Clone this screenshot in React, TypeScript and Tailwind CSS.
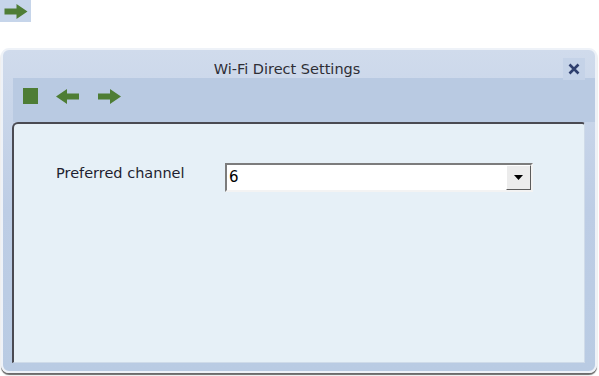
import React from 'react';

const font = { fontFamily: '"DejaVu Sans", Tahoma, sans-serif' };

const ArrowRight: React.FC<{ className?: string }> = ({ className }) => (
  <svg viewBox="0 0 25 17" className={className}>
    <path d="M1 5.5 H13 V1 L24 8.5 L13 16 V11.5 H1 Z" fill="#4e7d35" />
  </svg>
);

const ArrowLeft: React.FC<{ className?: string }> = ({ className }) => (
  <svg viewBox="0 0 25 17" className={className}>
    <path d="M24 5.5 H12 V1 L1 8.5 L12 16 V11.5 H24 Z" fill="#4e7d35" />
  </svg>
);

const App: React.FC = () => {
  return (
    <div className="w-[599px] h-[376px] bg-white overflow-hidden" style={font}>
      <div className="w-[31px] h-[22px] bg-[#c6d5ea] flex items-center justify-center">
        <ArrowRight className="w-[26px] h-[17px]" />
      </div>

      <div className="mt-[26px] ml-[1px] w-[596px] h-[325px] rounded-[8px] border-2 border-[#eef2f8] bg-gradient-to-b from-[#d0dbec] via-[#bdcde5] to-[#b9cbe3] shadow-[0_2px_1px_#6b6b6b] flex flex-col">
        <div className="h-[28px] flex items-end relative">
          <div className="flex-1 text-center text-[14.5px] leading-[18px] text-[#2e2e36] pr-[24px]">Wi-Fi Direct Settings</div>
          <div className="absolute right-[10px] top-[8px] w-[22px] h-[22px] bg-[#c5d3e8] flex items-center justify-center">
            <svg viewBox="0 0 12 12" className="w-[12px] h-[12px]">
              <path d="M1.5 1.5 L10.5 10.5 M10.5 1.5 L1.5 10.5" stroke="#2f3f6e" strokeWidth="2.6" />
            </svg>
          </div>
        </div>

        <div className="h-[44px] ml-[10px] bg-[#b9cae2] flex items-center gap-[17px] pl-[10px] pb-[8px]">
          <div className="w-[15px] h-[16px] bg-[#4e7d35]" />
          <ArrowLeft className="w-[25px] h-[17px]" />
          <ArrowRight className="w-[25px] h-[17px]" />
        </div>

        <div className="flex-1 ml-[9px] mr-[10px] mb-[8px] rounded-tl-[6px] rounded-tr-[3px] border-l-2 border-t-2 border-[#4a4a52] border-r border-b border-r-[#cfdbe9] border-b-[#cfdbe9] bg-[#e6f0f7]">
          <div className="flex items-center mt-[39px] ml-[42px]">
            <div className="w-[169px] text-[14.5px] text-[#1e1e30] -mt-[8px]">Preferred channel</div>
            <div className="w-[308px] h-[29px] border-2 border-t-[#7c7c7c] border-l-[#7c7c7c] border-r-[#f3f3f3] border-b-[#f3f3f3] bg-white flex">
              <div className="flex-1 text-[15px] text-black pl-[2px] leading-[25px]">6</div>
              <div className="w-[25px] h-[25px] bg-[#ececec] border border-t-white border-l-white border-r-[#5c5c5c] border-b-[#5c5c5c] flex items-center justify-center">
                <svg viewBox="0 0 9 5" className="w-[9px] h-[5px]">
                  <path d="M0 0 H9 L4.5 5 Z" fill="#000" />
                </svg>
              </div>
            </div>
          </div>
        </div>
      </div>
    </div>
  );
};

export default App;
